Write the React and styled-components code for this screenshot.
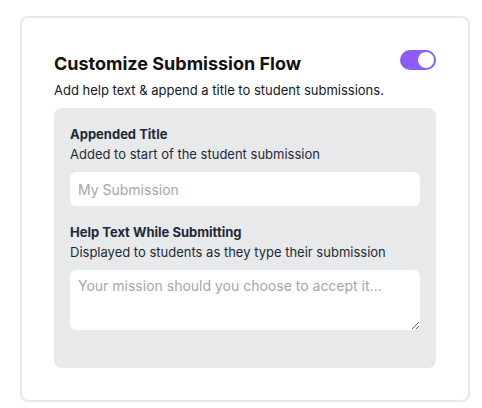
import React, { useState } from 'react';
import styled, { createGlobalStyle } from 'styled-components';

const Global = createGlobalStyle`
body {
  margin: 0;
  background: #ffffff;
  font-family: Inter, "Noto Sans", sans-serif;
}
`

const Card = styled.div`
  width: 450px;
  box-sizing: border-box;
  margin: 16px 0 0 20px;
  padding: 32px;
  border: 2px solid #e7e8ea;
  border-radius: 8px;
  background: #ffffff;
`

const Header = styled.div`
  display: flex;
  justify-content: space-between;
  align-items: flex-start;
`

const Title = styled.h2`
  margin: 0;
  font-size: 18px;
  line-height: 28px;
  font-weight: 700;
  color: #111111;
`

const Subtitle = styled.p`
  margin: 2px 0 0;
  font-size: 13px;
  line-height: 20px;
  color: #111827;
`

const Toggle = styled.button`
  position: relative;
  width: 36px;
  height: 20px;
  padding: 0;
  border: none;
  border-radius: 10px;
  background: ${p => (p.$on ? '#8b5cf6' : '#d1d5db')};
  cursor: pointer;
`

const Knob = styled.span`
  position: absolute;
  top: 2px;
  left: ${p => (p.$on ? '18px' : '2px')};
  width: 16px;
  height: 16px;
  border-radius: 50%;
  background: #ffffff;
`

const Panel = styled.div`
  margin-top: 8px;
  padding: 16px 16px 22px;
  background: #e8e9eb;
  border-radius: 8px;
`

const Field = styled.div`
  margin-bottom: 16px;
`

const Label = styled.div`
  font-size: 13px;
  line-height: 20px;
  font-weight: 700;
  color: #1f2937;
`

const Hint = styled.div`
  font-size: 13px;
  line-height: 20px;
  color: #1f2937;
  margin-bottom: 8px;
`

const Input = styled.input`
  display: block;
  width: 100%;
  box-sizing: border-box;
  height: 34px;
  padding: 0 8px;
  border: none;
  border-radius: 6px;
  background: #ffffff;
  font-family: inherit;
  font-size: 14px;
  color: #111827;
  outline: none;
  &::placeholder { color: #a3a6ad; }
`

const TextArea = styled.textarea`
  display: block;
  width: 100%;
  box-sizing: border-box;
  height: 60px;
  padding: 6px 8px;
  border: none;
  border-radius: 6px;
  background: #ffffff;
  font-family: inherit;
  font-size: 14px;
  line-height: 20px;
  color: #111827;
  outline: none;
  &::placeholder { color: #a3a6ad; }
`

export default function App() {
  const [on, setOn] = useState(true);
  return (
    <>
      <Global />
      <Card>
        <Header>
          <Title>Customize Submission Flow</Title>
          <Toggle $on={on} onClick={() => setOn(!on)}>
            <Knob $on={on} />
          </Toggle>
        </Header>
        <Subtitle>Add help text &amp; append a title to student submissions.</Subtitle>
        <Panel>
          <Field>
            <Label>Appended Title</Label>
            <Hint>Added to start of the student submission</Hint>
            <Input placeholder="My Submission" />
          </Field>
          <Field>
            <Label>Help Text While Submitting</Label>
            <Hint>Displayed to students as they type their submission</Hint>
            <TextArea placeholder="Your mission should you choose to accept it..." />
          </Field>
        </Panel>
      </Card>
    </>
  );
}
